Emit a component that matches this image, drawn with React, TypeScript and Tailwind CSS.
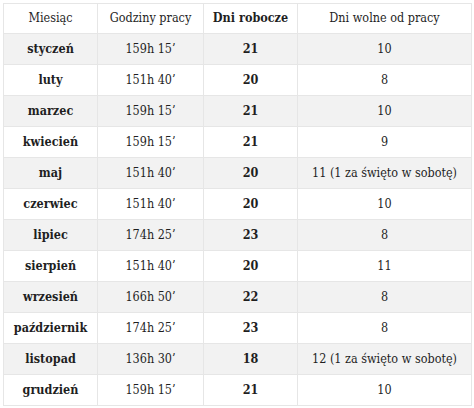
const rows: [string, string, string, string][] = [
  ["styczeń", "159h 15’", "21", "10"],
  ["luty", "151h 40’", "20", "8"],
  ["marzec", "159h 15’", "21", "10"],
  ["kwiecień", "159h 15’", "21", "9"],
  ["maj", "151h 40’", "20", "11 (1 za święto w sobotę)"],
  ["czerwiec", "151h 40’", "20", "10"],
  ["lipiec", "174h 25’", "23", "8"],
  ["sierpień", "151h 40’", "20", "11"],
  ["wrzesień", "166h 50’", "22", "8"],
  ["październik", "174h 25’", "23", "8"],
  ["listopad", "136h 30’", "18", "12 (1 za święto w sobotę)"],
  ["grudzień", "159h 15’", "21", "10"],
];

export default function App() {
  return (
    <div className="w-[474px] h-[408px] bg-white p-[3px] font-['DejaVu_Serif_Condensed','DejaVu_Serif',serif] text-[12.5px] text-[#1f1f1f]">
      <table className="w-[468px] table-fixed border-collapse">
        <colgroup>
          <col className="w-[94px]" />
          <col className="w-[106px]" />
          <col className="w-[94px]" />
          <col className="w-[174px]" />
        </colgroup>
        <thead>
          <tr className="h-[30px]">
            <th className="border border-[#e6e6e6] font-normal">Miesiąc</th>
            <th className="border border-[#e6e6e6] font-normal">Godziny pracy</th>
            <th className="border border-[#e6e6e6] font-bold">Dni robocze</th>
            <th className="border border-[#e6e6e6] font-normal">Dni wolne od pracy</th>
          </tr>
        </thead>
        <tbody>
          {rows.map((r, i) => (
            <tr key={r[0]} className={i % 2 === 0 ? "h-[31px] bg-[#f2f2f2]" : "h-[31px] bg-white"}>
              <td className="border border-[#e6e6e6] text-center font-bold">{r[0]}</td>
              <td className="border border-[#e6e6e6] text-center">{r[1]}</td>
              <td className="border border-[#e6e6e6] text-center font-bold">{r[2]}</td>
              <td className="border border-[#e6e6e6] text-center">{r[3]}</td>
            </tr>
          ))}
        </tbody>
      </table>
    </div>
  );
}
